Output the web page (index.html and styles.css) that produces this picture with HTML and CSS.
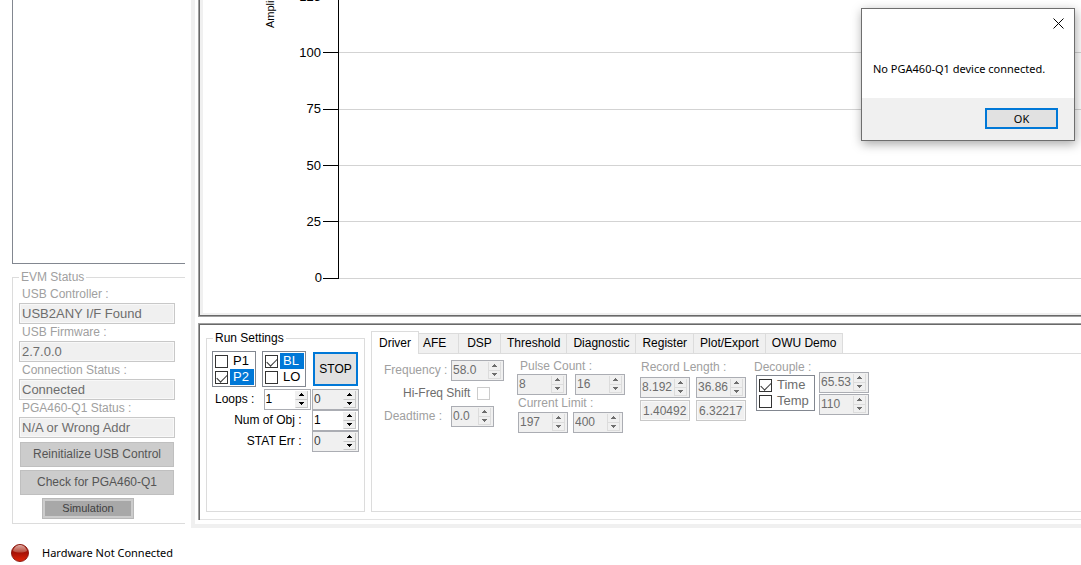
FILE: index.html
```html
<!DOCTYPE html>
<html lang="en">
<head>
<meta charset="utf-8">
<title>PGA460-Q1 EVM</title>
<link rel="stylesheet" href="styles.css">
</head>
<body>
<svg class="defs" aria-hidden="true">
  <symbol id="up" viewBox="0 0 5 3"><path d="M2 0h1v1h1v1h1v1H0V2h1V1h1z"/></symbol>
  <symbol id="down" viewBox="0 0 5 3"><path d="M0 0h5v1H4v1H3v1H2V2H1V1H0z"/></symbol>
</svg>
<div class="app">
  <aside class="sidebar">
    <div class="log"></div>
    <fieldset class="group evm">
      <legend>EVM Status</legend>
      <label for="usb">USB Controller :</label>
      <input class="readout" id="usb" value="USB2ANY I/F Found" readonly>
      <label for="fw">USB Firmware :</label>
      <input class="readout" id="fw" value="2.7.0.0" readonly>
      <label for="conn">Connection Status :</label>
      <input class="readout" id="conn" value="Connected" readonly>
      <label for="pga">PGA460-Q1 Status :</label>
      <input class="readout" id="pga" value="N/A or Wrong Addr" readonly>
      <button class="flat">Reinitialize USB Control</button>
      <button class="flat">Check for PGA460-Q1</button>
      <button class="sim">Simulation</button>
    </fieldset>
  </aside>
  <main class="work">
    <section class="plot">
      <svg class="chart" role="img" aria-label="Amplitude chart">
        <g class="gridlines">
          <line x1="136" x2="100%" y1="52.5" y2="52.5"/>
          <line x1="136" x2="100%" y1="109.5" y2="109.5"/>
          <line x1="136" x2="100%" y1="165.5" y2="165.5"/>
          <line x1="136" x2="100%" y1="221.5" y2="221.5"/>
          <line x1="136" x2="100%" y1="278.5" y2="278.5"/>
        </g>
        <path class="axis" d="M135.500 0V279M120 52.500H136M120 109.500H136M120 165.500H136M120 221.500H136M120 278.500H136"/>
        <g class="ticks">
          <text x="118" y="1">125</text>
          <text x="118" y="57">100</text>
          <text x="118" y="113">75</text>
          <text x="118" y="170">50</text>
          <text x="118" y="226">25</text>
          <text x="119" y="282">0</text>
        </g>
        <text class="ytitle" transform="translate(71 28) rotate(-90)">Amplitude</text>
      </svg>
    </section>
    <section class="controls">
      <fieldset class="group run">
        <legend>Run Settings</legend>
        <div class="modes">
          <div class="checks">
            <label><input type="checkbox"><span>P1</span></label>
            <label><input type="checkbox" checked><span class="sel">P2</span></label>
          </div>
          <div class="checks">
            <label><input type="checkbox" checked><span class="sel">BL</span></label>
            <label><input type="checkbox"><span>LO</span></label>
          </div>
          <button class="stop">STOP</button>
        </div>
        <div class="counts">
          <label class="start" for="loops">Loops :</label>
          <div class="spin"><input id="loops" value="1"><i><button aria-label="Up"><svg><use href="#up"/></svg></button><button aria-label="Down"><svg><use href="#down"/></svg></button></i></div>
          <div class="spin grey"><input aria-label="Loops done" value="0"><i><button aria-label="Up"><svg><use href="#up"/></svg></button><button aria-label="Down"><svg><use href="#down"/></svg></button></i></div>
          <label class="wide" for="obj">Num of Obj :</label>
          <div class="spin"><input id="obj" value="1"><i><button aria-label="Up"><svg><use href="#up"/></svg></button><button aria-label="Down"><svg><use href="#down"/></svg></button></i></div>
          <label class="wide" for="stat">STAT Err :</label>
          <div class="spin grey"><input id="stat" value="0"><i><button aria-label="Up"><svg><use href="#up"/></svg></button><button aria-label="Down"><svg><use href="#down"/></svg></button></i></div>
        </div>
      </fieldset>
      <div class="tabs">
        <div class="tablist" role="tablist">
          <button role="tab" class="tab active" aria-selected="true">Driver</button>
          <button role="tab" class="tab afe">AFE</button>
          <button role="tab" class="tab dsp">DSP</button>
          <button role="tab" class="tab">Threshold</button>
          <button role="tab" class="tab">Diagnostic</button>
          <button role="tab" class="tab">Register</button>
          <button role="tab" class="tab">Plot/Export</button>
          <button role="tab" class="tab">OWU Demo</button>
        </div>
        <div class="panel" role="tabpanel">
          <div class="driver">
            <label for="freq">Frequency :</label>
            <div class="spin off freq"><input id="freq" value="58.0"><i><button aria-label="Up"><svg><use href="#up"/></svg></button><button aria-label="Down"><svg><use href="#down"/></svg></button></i></div>
            <label class="shift">Hi-Freq Shift <input type="checkbox" disabled></label>
            <label for="dead">Deadtime :</label>
            <div class="spin off dead"><input id="dead" value="0.0"><i><button aria-label="Up"><svg><use href="#up"/></svg></button><button aria-label="Down"><svg><use href="#down"/></svg></button></i></div>
          </div>
          <div class="pulses">
            <label for="p1">Pulse Count :</label>
            <div class="pair">
              <div class="spin off"><input id="p1" value="8"><i><button aria-label="Up"><svg><use href="#up"/></svg></button><button aria-label="Down"><svg><use href="#down"/></svg></button></i></div>
              <div class="spin off"><input aria-label="Pulse count 2" value="16"><i><button aria-label="Up"><svg><use href="#up"/></svg></button><button aria-label="Down"><svg><use href="#down"/></svg></button></i></div>
            </div>
            <label for="c1">Current Limit :</label>
            <div class="pair limits">
              <div class="spin off"><input id="c1" value="197"><i><button aria-label="Up"><svg><use href="#up"/></svg></button><button aria-label="Down"><svg><use href="#down"/></svg></button></i></div>
              <div class="spin off"><input aria-label="Current limit 2" value="400"><i><button aria-label="Up"><svg><use href="#up"/></svg></button><button aria-label="Down"><svg><use href="#down"/></svg></button></i></div>
            </div>
          </div>
          <div class="record">
            <label for="r1">Record Length :</label>
            <div class="spin off"><input id="r1" value="8.192"><i><button aria-label="Up"><svg><use href="#up"/></svg></button><button aria-label="Down"><svg><use href="#down"/></svg></button></i></div>
            <div class="spin off"><input aria-label="Record length 2" value="36.86"><i><button aria-label="Up"><svg><use href="#up"/></svg></button><button aria-label="Down"><svg><use href="#down"/></svg></button></i></div>
            <input class="readout" aria-label="Distance 1" value="1.40492" readonly>
            <input class="readout" aria-label="Distance 2" value="6.32217" readonly>
          </div>
          <div class="decouple">
            <span class="caption">Decouple :</span>
            <div class="checks">
              <label><input type="checkbox" checked><span>Time</span></label>
              <label><input type="checkbox"><span>Temp</span></label>
            </div>
          </div>
          <div class="decvals">
            <div class="spin off"><input aria-label="Decouple time" value="65.53"><i><button aria-label="Up"><svg><use href="#up"/></svg></button><button aria-label="Down"><svg><use href="#down"/></svg></button></i></div>
            <div class="spin off"><input aria-label="Decouple temperature" value="110"><i><button aria-label="Up"><svg><use href="#up"/></svg></button><button aria-label="Down"><svg><use href="#down"/></svg></button></i></div>
          </div>
        </div>
      </div>
    </section>
  </main>
</div>
<footer class="status">
  <svg class="led" viewBox="0 0 18 18" aria-hidden="true">
    <defs>
      <linearGradient id="red" x1="0" y1="0" x2="0" y2="1"><stop offset="0" stop-color="#a41c10"/><stop offset=".5" stop-color="#a81206"/><stop offset="1" stop-color="#e02408"/></linearGradient>
      <linearGradient id="shine" x1="0" y1="0" x2="0" y2="1"><stop offset="0" stop-color="#dca8a0"/><stop offset="1" stop-color="#b84838"/></linearGradient>
    </defs>
    <circle cx="9" cy="9" r="8.500" fill="url(#red)" stroke="#8c1c14"/>
    <path d="M2 7C3 3 6 1 9 1s6 2 7 6C12 9 6 9 2 7z" fill="url(#shine)"/>
  </svg>
  <span>Hardware Not Connected</span>
</footer>
<div class="dialog" role="dialog" aria-label="Message">
  <button class="close" aria-label="Close"><svg viewBox="0 0 11 11"><path d="M.5.5l10 10M10.500.5l-10 10"/></svg></button>
  <p>No PGA460-Q1 device connected.</p>
  <div class="actions"><button>OK</button></div>
</div>
</body>
</html>
```

FILE: styles.css
```css
* { box-sizing: border-box; }
body {
  margin: 0;
  background: #fff;
  color: #000;
  font: 12px/15px "Liberation Sans", Arial, sans-serif;
  overflow: hidden;
}
button, input { font: inherit; color: inherit; margin: 0; padding: 0; border-radius: 0; }
.defs { display: none; }

.app { display: flex; height: 528px; }
.sidebar { width: 191px; flex: none; padding: 0 6px 4px 12px; display: flex; flex-direction: column; }
.log { flex: 1; border: solid #828790; border-width: 0 0 1px 1px; margin-bottom: 6px; }
.group { margin: 0; padding: 0; border: 1px solid #dcdcdc; min-width: 0; }
.group legend { padding: 0 2px; margin-left: 1px; line-height: 15px; }
.evm { height: 254px; border-right: 0; color: #a0a0a0; padding: 0 10px 0 6px; }
.evm legend { margin-left: 0; }
.evm label { display: block; height: 17px; line-height: 17px; padding-left: 3px; }
.evm legend + label { margin-top: 1px; }
.readout {
  display: block; width: 100%; height: 21px; padding: 0 2px;
  border: 1px solid #c8c8c8; outline: 1px solid #f8f8f8; outline-offset: -2px;
  background: #f0f0f0; color: #6d6d6d; font-size: 13px;
}
.flat {
  display: block; width: calc(100% - 2px); height: 25px; margin: 4px 1px 3px;
  background: #ccc; border: 1px solid #bfbfbf; color: #555;
}
.flat + .flat { margin-top: 0; }
.sim {
  display: block; width: 92px; height: 21px; margin: 0 auto 0 23px; background: #a8a8a8;
  border: 1px solid #b8b8b8; box-shadow: inset 0 0 0 2px #ccc; color: #404040; font-size: 11px;
}

.work { flex: 1; min-width: 0; border: 4px solid #f0f0f0; border-width: 0 0 4px 4px; padding: 0 0 4px 3px; display: flex; flex-direction: column; }
.plot { height: 317px; margin-bottom: 6px; border: solid #a0a0a0; border-width: 0 0 1px 1px; box-shadow: inset 1px 0 #696969, inset 0 -1px #696969, inset 4px 0 #f0f0f0, inset 0 -3px #f0f0f0; overflow: hidden; padding-left: 4px; }
.chart { display: block; width: 100%; height: 312px; }
.gridlines line { stroke: #d3d3d3; }
.axis { stroke: #000; fill: none; }
.ticks text { font: 13px "Liberation Sans", Arial, sans-serif; text-anchor: end; }
.ytitle { font: 11px "Liberation Sans", Arial, sans-serif; }

.controls { flex: 1; border: solid #a0a0a0; border-width: 1px 0 0 1px; box-shadow: inset 1px 1px #696969, inset 0 -1px #e3e3e3; padding: 7px 0 8px 7px; display: flex; gap: 6px; }
.run { width: 159px; flex: none; padding: 5px 5px 0; }
.modes { display: flex; gap: 6px; height: 37px; }
.checks { width: 44px; height: 36px; border: 1px solid #828790; padding: 1px; font-size: 13px; }
.checks label { display: flex; height: 16px; align-items: center; gap: 2px; padding-left: 1px; line-height: 16px; }
.checks span { flex: 1; padding-left: 3px; }
.sel { background: #0078d7; color: #fff; }
input[type="checkbox"] { appearance: none; width: 13px; height: 13px; flex: none; border: 1px solid #333; background: #fff; }
input[type="checkbox"]:checked::before { content: ""; display: block; width: 9px; height: 5px; margin: 2px 1px; border: solid #333; border-width: 0 0 1px 1px; transform: rotate(-45deg); }
input[type="checkbox"]:disabled { border-color: #ccc; }
.stop { width: 45px; height: 34px; margin: 1px 0 0 1px; background: #e1e1e1; border: 2px solid #0078d7; }
.counts { display: grid; grid-template-columns: 50px 47px 47px; justify-content: space-between; align-items: center; padding-top: 1px; }
.counts label { text-align: right; padding-right: 9px; }
.counts .start { text-align: left; padding: 0 0 0 3px; white-space: nowrap; }
.counts .wide { grid-column: span 2; }

.spin { display: flex; height: 21px; width: 50px; border: 1px solid #abadb3; background: #fff; padding: 1px 2px 1px 1px; font-size: 13px; }
.counts .spin { width: 47px; font-size: 12px; }
.spin input { flex: 1; min-width: 0; width: 0; border: 0; background: none; padding: 0; height: 16px; }
.spin i { width: 13px; flex: none; display: flex; flex-direction: column; }
.spin button { flex: 1; min-height: 0; border: solid #c8c8c8; border-width: 0 1px 1px 1px; border-left-color: #f0f0f0; background: #f0f0f0; display: flex; align-items: center; justify-content: center; }
.spin svg { width: 5px; height: 3px; }
.grey, .off { background: #f0f0f0; }
.grey { color: #404040; }
.off { color: #6d6d6d; font-size: 12px; }
.off button { border-color: #dcdcdc; }
.off svg { fill: #6d6d6d; }

.tabs { flex: 1; min-width: 0; display: flex; flex-direction: column; }
.tablist { display: flex; align-items: flex-end; height: 23px; border-bottom: 1px solid #dcdcdc; }
.tab { height: 20px; padding: 0 6px; background: #f0f0f0; border: solid #dcdcdc; border-width: 1px 1px 0 0; white-space: nowrap; }
.tab.active { height: 23px; width: 48px; margin-bottom: -1px; background: #fff; border-left-width: 1px; }
.afe { width: 40px; padding: 0 14px 0 4px; }
.dsp { width: 42px; }
.panel { flex: 1; border: solid #dcdcdc; border-width: 0 0 1px 1px; padding: 6px 0 0 12px; display: flex; align-items: flex-start; color: #a0a0a0; }
.panel label, .caption { white-space: nowrap; }
.driver { display: grid; grid-template-columns: 67px 66px; grid-template-rows: 21px 25px 21px; align-items: center; }
.freq { width: 53px; }
.dead { width: 43px; }
.driver .shift { grid-column: span 2; color: #6d6d6d; padding-left: 19px; display: flex; gap: 7px; align-items: center; }
.pulses { width: 123px; }
.pulses label { display: block; padding-left: 3px; height: 14px; line-height: 13px; }
.pulses .pair + label { padding-left: 1px; height: 17px; line-height: 17px; }
.pair { display: flex; gap: 8px; }
.limits { gap: 5px; padding-left: 1px; }
.record { display: grid; grid-template-columns: 50px 50px; gap: 2px 6px; width: 114px; }
.record label { grid-column: span 2; height: 15px; line-height: 15px; padding-left: 1px; }
.record .readout { width: 50px; padding: 0 2px; font-size: 12px; }
.decouple { width: 65px; }
.caption { display: block; height: 15px; }
.decouple .checks { width: 59px; margin-left: 2px; color: #6d6d6d; }
.decvals { display: grid; gap: 1px; padding-top: 12px; }

.status { display: flex; align-items: center; gap: 13px; padding: 16px 11px; font: 11px/18px "Noto Sans", "Open Sans", sans-serif; }
.led { width: 18px; height: 18px; }

.dialog {
  position: absolute; top: 8px; right: 6px; width: 214px; background: #fff; border: 1px solid #6e6e6e;
  box-shadow: 1px 3px 10px rgba(0, 0, 0, .35);
  font: 11px/15px "Noto Sans", "Open Sans", sans-serif;
  display: flex; flex-direction: column;
}
.close { align-self: flex-end; width: 31px; height: 28px; border: 0; background: none; display: flex; align-items: center; justify-content: center; }
.close svg { width: 11px; height: 11px; stroke: #000; }
.dialog p { margin: 24px 11px 22px; }
.actions { background: #f0f0f0; padding: 10px 16px 11px; display: flex; justify-content: flex-end; }
.actions button { width: 73px; height: 21px; background: #e1e1e1; border: 2px solid #0078d7; line-height: 15px; }
```
